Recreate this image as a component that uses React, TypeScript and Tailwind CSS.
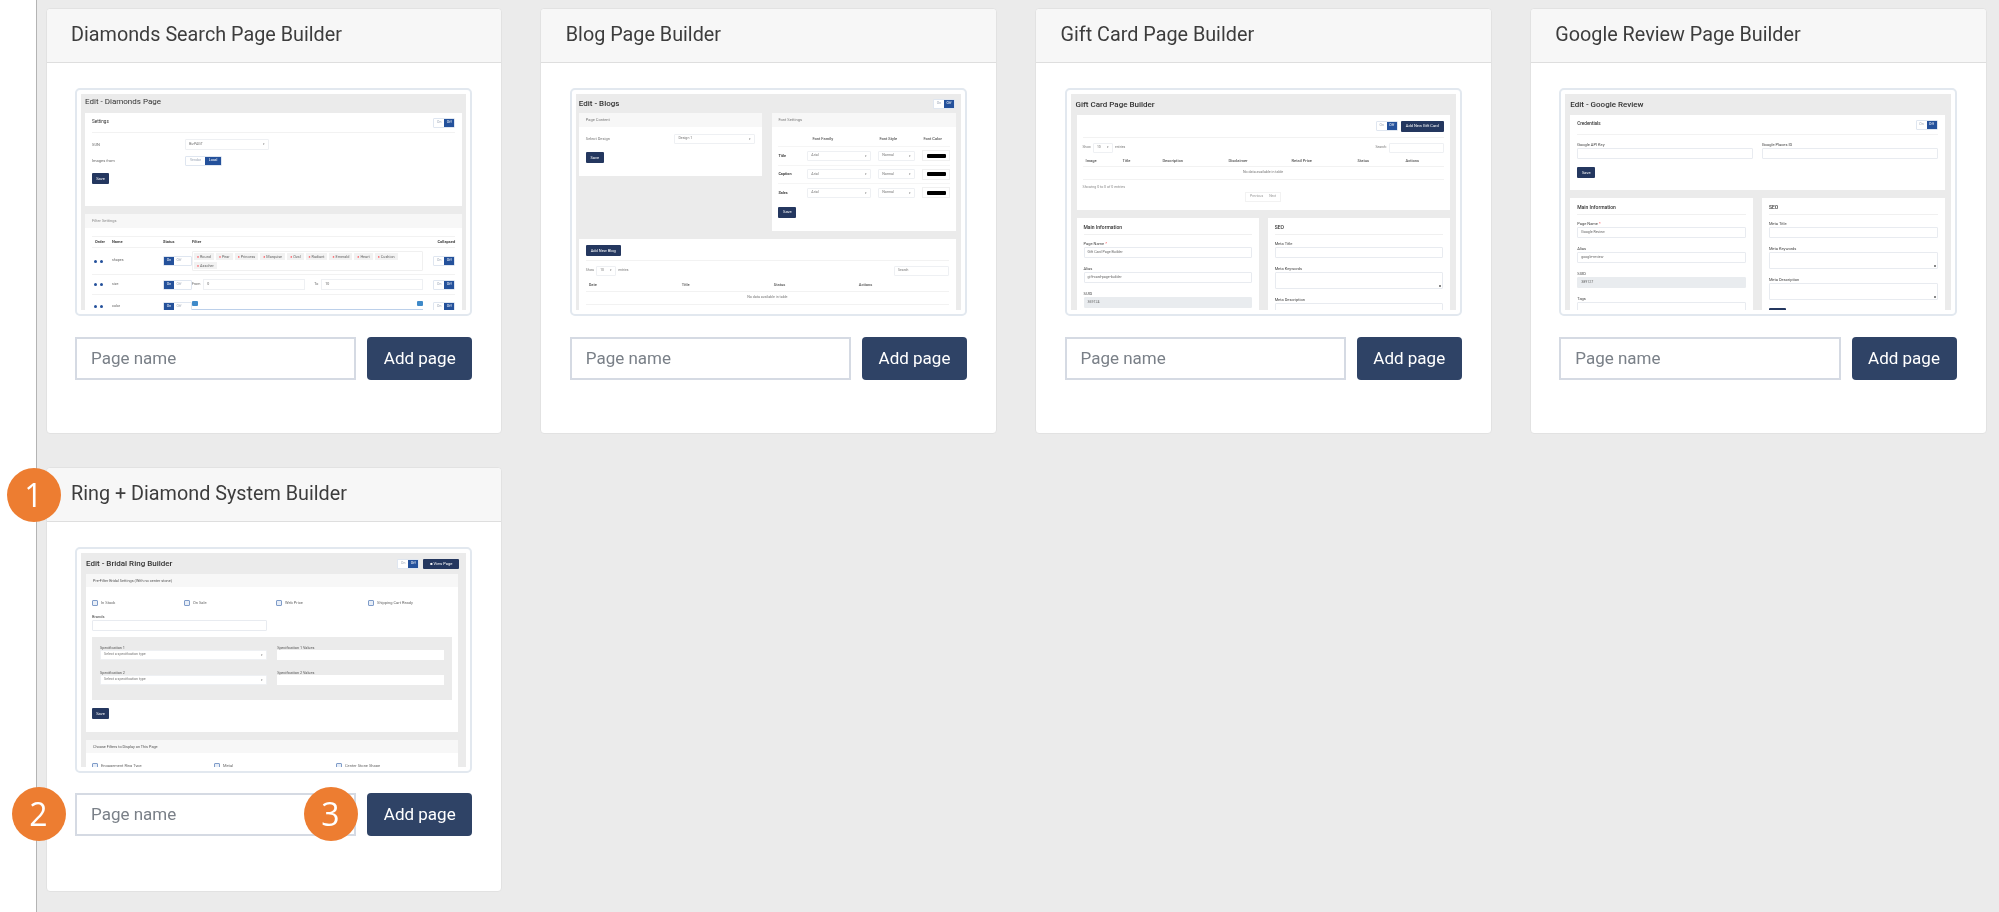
import React from "react";

const Dark = "bg-[#24375f] text-white rounded-[1px] flex items-center justify-center";

function Btn({ w, h = 11, children }: { w: number; h?: number; children: React.ReactNode }) {
  return (
    <div className={`${Dark} text-[4px] shrink-0`} style={{ width: w, height: h }}>
      {children}
    </div>
  );
}

function Toggle({ a = "On", b = "Off", on = false, w = 10, w2 = 10 }: { a?: string; b?: string; on?: boolean; w?: number; w2?: number }) {
  return (
    <div className="flex h-[10px] text-[3.5px] rounded-[1px] border border-[#dfe6f0] shrink-0">
      <div className={`flex items-center justify-center ${on ? "bg-[#24519b] text-white" : "bg-white text-[#9aa5b5]"}`} style={{ width: w }}>{a}</div>
      <div className={`flex items-center justify-center ${on ? "bg-white text-[#9aa5b5]" : "bg-[#24519b] text-white"}`} style={{ width: w2 }}>{b}</div>
    </div>
  );
}

function Field({ label, value, h = 11, grey = false, star = false, mb = 8, area = false }: { label: string; value?: string; h?: number; grey?: boolean; star?: boolean; mb?: number; area?: boolean }) {
  return (
    <div style={{ marginBottom: mb }}>
      <div className="text-[4px] leading-[5px] text-[#444]">
        {label}
        {star && <span className="text-red-500"> *</span>}
      </div>
      <div
        className={`relative mt-[1px] rounded-[1px] border px-[3px] text-[3.6px] flex items-center text-[#666] ${grey ? "bg-[#e9ecef] border-[#e9ecef]" : "bg-white border-[#e8ebf0]"}`}
        style={{ height: h }}
      >
        {value}
        {area && <span className="absolute right-[1px] bottom-[1px] w-[2px] h-[2px] bg-[#888]" />}
      </div>
    </div>
  );
}

function Select({ text, w, h = 10, className = "" }: { text: string; w?: number; h?: number; className?: string }) {
  return (
    <div
      className={`bg-white border border-[#eef0f3] rounded-[1px] px-[3px] flex items-center justify-between text-[3.6px] text-[#777] ${className}`}
      style={{ width: w, height: h }}
    >
      <span>{text}</span>
      <span className="text-[3px]">▾</span>
    </div>
  );
}

function ThumbFrame({ children, h = 228 }: { children: React.ReactNode; h?: number }) {
  return (
    <div className="border-2 border-[#e2e8ef] rounded-[5px] p-[4px] bg-white" style={{ height: h }}>
      <div className="h-full overflow-hidden bg-[#ebebeb] font-['Roboto',sans-serif] blur-[0.35px]">{children}</div>
    </div>
  );
}

function MainSeo({ google = false }: { google?: boolean }) {
  return (
    <div className={`grid grid-cols-2 gap-[9px] mr-[6px] ${google ? "ml-[5px]" : "ml-[6px]"}`}>
      <div className="bg-white px-[7px] pt-[5px] h-[200px]">
        <div className="text-[5px] leading-[8px] font-medium text-[#333] pb-[3px] border-b border-[#f0f0f0] mb-[6px]">Main Information</div>
        <Field label="Page Name" star value={google ? "Google Review" : "Gift Card Page Builder"} />
        <Field label="Alias" value={google ? "google-review" : "gift-card-page-builder"} />
        <Field label="SUID" value={google ? "389127" : "369124"} grey />
        <Field label="Tags" />
      </div>
      <div className="bg-white px-[7px] pt-[5px] h-[200px]">
        <div className="text-[5px] leading-[8px] font-medium text-[#333] pb-[3px] border-b border-[#f0f0f0] mb-[6px]">SEO</div>
        <Field label="Meta Title" />
        <Field label="Meta Keywords" h={17} area />
        <Field label="Meta Description" h={17} area />
        <Btn w={17}>Save</Btn>
      </div>
    </div>
  );
}

function DiamondsThumb() {
  const chips = ["Round", "Pear", "Princess", "Marquise", "Oval", "Radiant", "Emerald", "Heart", "Cushion", "Asscher"];
  const Row = ({ name, children, h }: { name: string; children: React.ReactNode; h: number }) => (
    <div className="flex items-center border-b border-[#f2f2f2] text-[3.6px] text-[#666]" style={{ height: h }}>
      <div className="w-[20px] flex gap-[3px] pl-[2px]">
        <span className="w-[3px] h-[3px] rounded-full bg-[#24519b]" />
        <span className="w-[3px] h-[3px] rounded-full bg-[#24519b]" />
      </div>
      <div className="w-[51px]">{name}</div>
      <div className="w-[29px]"><Toggle on /></div>
      <div className="flex-1 min-w-0">{children}</div>
      <div className="ml-[10px]"><Toggle /></div>
    </div>
  );
  return (
    <div>
      <div className="h-[19px] pl-[4px] text-[8px] leading-[15px] text-[#333]">Edit - Diamonds Page</div>
      <div className="mx-[4px] bg-white h-[93px] px-[7px]">
        <div className="flex items-center justify-between h-[20px] border-b border-[#f2f2f2]">
          <span className="text-[4.6px] text-[#333]">Settings</span>
          <Toggle />
        </div>
        <div className="flex items-center h-[11px] mt-[6px] text-[4px] text-[#666]">
          <div className="w-[93px]">SUN</div>
          <Select text="BizPAGT" w={84} h={11} />
        </div>
        <div className="flex items-center h-[10px] mt-[6px] text-[4px] text-[#666]">
          <div className="w-[93px]">Images from</div>
          <Toggle a="Vendor" b="Local" w={19} w2={16} />
        </div>
        <div className="mt-[7px]"><Btn w={17}>Save</Btn></div>
      </div>
      <div className="mx-[4px] mt-[8px] bg-white h-[120px]">
        <div className="h-[14px] bg-[#f7f7f7] px-[7px] flex items-center text-[4px] text-[#888]">Filter Settings</div>
        <div className="mx-[7px] mt-[8px]">
          <div className="flex items-center h-[12px] border-y border-[#f2f2f2] text-[4px] font-bold text-[#444]">
            <div className="w-[20px] pl-[3px]">Order</div>
            <div className="w-[51px]">Name</div>
            <div className="w-[29px]">Status</div>
            <div className="flex-1">Filter</div>
            <div className="w-[24px] text-right">Collapsed</div>
          </div>
          <Row name="shapes" h={27}>
            <div className="flex flex-wrap gap-[2px] border border-[#f0f0f0] p-[1px] rounded-[1px]">
              {chips.map((c) => (
                <span key={c} className="bg-[#f2f2f2] px-[3px] h-[7px] flex items-center text-[3.8px] text-[#666]">
                  <span className="text-red-500 mr-[1px]">×</span>{c}
                </span>
              ))}
            </div>
          </Row>
          <Row name="size" h={20}>
            <div className="flex items-center gap-[3px]">
              <span>From</span>
              <div className="flex-1 h-[11px] border border-[#eef0f3] px-[3px] flex items-center">0</div>
              <span className="ml-[6px]">To</span>
              <div className="flex-1 h-[11px] border border-[#eef0f3] px-[3px] flex items-center">10</div>
            </div>
          </Row>
          <Row name="color" h={24}>
            <div className="relative h-[12px]">
              <div className="absolute left-0 right-0 top-[8px] h-[1px] bg-[#bcd0ea]" />
              <div className="absolute left-0 top-0 w-[6px] h-[5px] bg-[#3f8ac9] rounded-[1px]" />
              <div className="absolute right-0 top-0 w-[6px] h-[5px] bg-[#3f8ac9] rounded-[1px]" />
            </div>
          </Row>
        </div>
      </div>
    </div>
  );
}

function FontRow({ label }: { label: string }) {
  return (
    <div className="flex items-center h-[18.5px] border-t border-[#f5f5f5] text-[3.8px]">
      <div className="w-[29px] font-bold text-[#444]">{label}</div>
      <Select text="Arial" w={64} className="mr-[7px]" />
      <Select text="Normal" w={37} className="mr-[7px]" />
      <div className="w-[28px] h-[11px] border border-[#f0f0f0] flex items-center justify-center">
        <div className="w-[19px] h-[4px] bg-black rounded-[1px]" />
      </div>
    </div>
  );
}

function DataControls({ search }: { search?: string }) {
  return (
    <div className="flex items-center justify-between text-[3.4px] text-[#777] h-[11px]">
      <div className="flex items-center gap-[2px]">
        Show
        <div className="w-[20px] h-[10px] border border-[#eef0f3] rounded-[1px] flex items-center justify-between px-[3px]"><span>10</span><span>▾</span></div>
        entries
      </div>
      <div className="flex items-center gap-[2px]">
        {search}
        <div className="w-[55px] h-[10px] border border-[#eef0f3] rounded-[1px] flex items-center px-[3px]">{search ? "" : "Search"}</div>
      </div>
    </div>
  );
}

function BlogThumb() {
  return (
    <div>
      <div className="h-[19px] pl-[3px] pr-[6px] flex items-center justify-between">
        <span className="text-[8px] font-medium text-[#333]">Edit - Blogs</span>
        <Toggle />
      </div>
      <div className="grid grid-cols-2 gap-[10px] mx-[3px] mr-[5px] items-start">
        <div className="bg-white h-[63px]">
          <div className="h-[14px] bg-[#f7f7f7] px-[7px] flex items-center text-[4px] text-[#777]">Page Content</div>
          <div className="px-[7px] mt-[7px] flex items-center justify-between text-[4px] text-[#777]">
            <span>Select Design</span>
            <Select text="Design 1" w={81} />
          </div>
          <div className="px-[7px] mt-[8px]"><Btn w={18}>Save</Btn></div>
        </div>
        <div className="bg-white h-[118px]">
          <div className="h-[14px] bg-[#f7f7f7] px-[6px] flex items-center text-[4px] text-[#777]">Font Settings</div>
          <div className="px-[6px]">
            <div className="flex items-center h-[19px] pt-[5px] text-[4px] font-medium text-[#555]">
              <div className="w-[29px] pl-[1px]" /><div className="w-[72px] pl-[5px]">Font Family</div><div className="w-[44px]">Font Style</div><div>Font Color</div>
            </div>
            <FontRow label="Title" />
            <FontRow label="Caption" />
            <FontRow label="Sales" />
            <div className="mt-[5px]"><Btn w={18}>Save</Btn></div>
          </div>
        </div>
      </div>
      <div className="ml-[3px] mr-[5px] mt-[8px] bg-white h-[80px] px-[7px] pt-[6px]">
        <Btn w={35}>Add New Blog</Btn>
        <div className="border-b border-[#f2f2f2] h-[5px]" />
        <div className="mt-[4px]"><DataControls /></div>
        <div className="grid grid-cols-[93px_92px_85px_1fr] h-[13px] items-center pl-[3px] text-[4px] font-medium text-[#555] border-b border-[#f2f2f2] mt-[3px]">
          <span>Date</span><span>Title</span><span>Status</span><span>Actions</span>
        </div>
        <div className="h-[13px] flex items-center justify-center text-[3.6px] text-[#777] border-b border-[#f2f2f2]">No data available in table</div>
      </div>
    </div>
  );
}

function GiftThumb() {
  const cols = ["Image", "Title", "Description", "Disclaimer", "Retail Price", "Status", "Actions"];
  return (
    <div>
      <div className="h-[21px] pl-[5px] flex items-center text-[8px] font-medium text-[#333]">Gift Card Page Builder</div>
      <div className="ml-[6px] mr-[6px] bg-white h-[95px] px-[6px]">
        <div className="flex items-center justify-end gap-[3px] h-[23px] border-b border-[#f2f2f2]">
          <Toggle />
          <Btn w={43}>Add New Gift Card</Btn>
        </div>
        <div className="mt-[4px]"><DataControls search="Search:" /></div>
        <div className="grid grid-cols-[37px_40px_66px_63px_66px_48px_1fr] h-[12px] items-center pl-[3px] text-[4px] font-medium text-[#555] border-b border-[#f2f2f2] mt-[2px]">
          {cols.map((c) => <span key={c}>{c}</span>)}
        </div>
        <div className="h-[13px] flex items-center justify-center text-[3.6px] text-[#777] border-b border-[#f2f2f2]">No data available in table</div>
        <div className="text-[3.6px] text-[#888] mt-[5px] leading-[5px]">Showing 0 to 0 of 0 entries</div>
        <div className="flex justify-center mt-[2px]">
          <div className="flex h-[10px] items-center gap-[6px] border border-[#f2f2f2] px-[4px] text-[3.4px] text-[#999]"><span>Previous</span><span>Next</span></div>
        </div>
      </div>
      <div className="h-[8px]" />
      <MainSeo />
    </div>
  );
}

function GoogleThumb() {
  return (
    <div>
      <div className="h-[21px] pl-[5px] flex items-center text-[8px] font-medium text-[#333]">Edit - Google Review</div>
      <div className="ml-[5px] mr-[6px] bg-white h-[75px] px-[7px]">
        <div className="flex items-center justify-between h-[20px] border-b border-[#f2f2f2]">
          <span className="text-[4.6px] font-medium text-[#333]">Credentials</span>
          <Toggle />
        </div>
        <div className="grid grid-cols-2 gap-[9px] mt-[7px]">
          <Field label="Google API Key" />
          <Field label="Google Places ID" />
        </div>
        <Btn w={18}>Save</Btn>
      </div>
      <div className="h-[8px]" />
      <MainSeo google />
    </div>
  );
}

function Check({ label }: { label: string }) {
  return (
    <div className="flex items-center gap-[3px] text-[4px] text-[#666]">
      <span className="w-[6px] h-[6px] rounded-[1px] border border-[#7f9cc9] bg-[#e8eef7]" />
      {label}
    </div>
  );
}

function BridalThumb() {
  return (
    <div>
      <div className="h-[21px] pl-[5px] pr-[7px] flex items-center justify-between">
        <span className="text-[8px] font-medium text-[#333]">Edit - Bridal Ring Builder</span>
        <div className="flex items-center gap-[4px]">
          <Toggle />
          <Btn w={36} h={10}>■ View Page</Btn>
        </div>
      </div>
      <div className="ml-[5px] mr-[8px] bg-white h-[158px]">
        <div className="h-[13px] bg-[#f7f7f7] px-[7px] flex items-center text-[3.8px] text-[#555]">Pre-Filter Bridal Settings (With no center stone)</div>
        <div className="px-[6px]">
          <div className="grid grid-cols-[92px_92px_92px_1fr] pt-[9px] h-[22px]">
            <Check label="In Stock" /><Check label="On Sale" /><Check label="Web Price" /><Check label="Shipping Cart Ready" />
          </div>
          <div className="w-[175px] pt-[5px]"><Field label="Brands" mb={6} /></div>
          <div className="bg-[#ebebeb] h-[63px] px-[8px] pt-[8px] grid grid-cols-2 gap-x-[10px] content-start">
            <div className="h-[25px]">
              <div className="text-[3.8px] leading-[5px] text-[#555]">Specification 1</div>
              <Select text="Select a specification type" h={10} />
            </div>
            <div>
              <div className="text-[3.8px] leading-[5px] text-[#555]">Specification 1 Values</div>
              <div className="bg-white h-[10px]" />
            </div>
            <div>
              <div className="text-[3.8px] leading-[5px] text-[#555]">Specification 2</div>
              <Select text="Select a specification type" h={10} />
            </div>
            <div>
              <div className="text-[3.8px] leading-[5px] text-[#555]">Specification 2 Values</div>
              <div className="bg-white h-[10px]" />
            </div>
          </div>
          <div className="mt-[8px]"><Btn w={17}>Save</Btn></div>
        </div>
      </div>
      <div className="ml-[5px] mr-[8px] mt-[8px] bg-white h-[40px]">
        <div className="h-[13px] bg-[#f7f7f7] px-[7px] flex items-center text-[3.8px] text-[#555]">Choose Filters to Display on This Page</div>
        <div className="grid grid-cols-[122px_122px_1fr] px-[6px] pt-[10px]">
          <Check label="Engagement Ring Type" /><Check label="Metal" /><Check label="Center Stone Shape" />
        </div>
      </div>
    </div>
  );
}

function Badge({ n, className }: { n: number; className: string }) {
  return (
    <div className={`absolute w-[54px] h-[54px] rounded-full bg-[#ed7d31] text-white flex items-center justify-center text-[32px] font-['Open_Sans',sans-serif] ${className}`}>
      {n}
    </div>
  );
}

function Card({ title, thumb, second, children }: { title: string; thumb: React.ReactNode; second?: boolean; children?: React.ReactNode }) {
  return (
    <div className={`relative bg-white rounded-[4px] border border-[#e2e2e2] ${second ? "h-[425px]" : "h-[426px]"}`}>
      <div className="h-[54px] pb-[1px] bg-[#f7f7f7] border-b border-[#dedede] rounded-t-[4px] pl-[24.5px] flex items-center text-[19.8px] text-[#3d3d3d]">
        {title}
      </div>
      <div className="pl-[28.5px] pr-[29px] pt-[25px]">
        {thumb}
        <div className={`flex gap-[11px] ${second ? "mt-[20px]" : "mt-[21px]"}`}>
          <div className="flex-1 h-[43px] border-2 border-[#d5dae3] pl-[14px] flex items-center text-[17px] text-[#7a8088]">Page name</div>
          <button className="w-[105px] h-[43px] rounded-[4px] bg-[#2f4366] text-white text-[17px]">Add page</button>
        </div>
      </div>
      {children}
    </div>
  );
}

export default function App() {
  return (
    <div className="h-[912px] overflow-hidden flex bg-[#ebebeb] font-['Roboto',sans-serif] blur-[0.3px]">
      <div className="w-[37px] shrink-0 bg-white border-r border-[#b4b4b4]" />
      <div className="flex-1 pl-[8.5px] pr-[12.5px] pt-[8px]">
        <div className="grid grid-cols-4 gap-x-[38px] gap-y-[33px]">
          <Card title="Diamonds Search Page Builder" thumb={<ThumbFrame><DiamondsThumb /></ThumbFrame>} />
          <Card title="Blog Page Builder" thumb={<ThumbFrame><BlogThumb /></ThumbFrame>} />
          <Card title="Gift Card Page Builder" thumb={<ThumbFrame><GiftThumb /></ThumbFrame>} />
          <Card title="Google Review Page Builder" thumb={<ThumbFrame><GoogleThumb /></ThumbFrame>} />
          <Card title="Ring + Diamond System Builder" thumb={<ThumbFrame h={226}><BridalThumb /></ThumbFrame>} second>
            <Badge n={1} className="left-[-40px] top-0" />
            <Badge n={2} className="left-[-35px] top-[319px]" />
            <Badge n={3} className="left-[257px] top-[319px]" />
          </Card>
        </div>
      </div>
    </div>
  );
}
